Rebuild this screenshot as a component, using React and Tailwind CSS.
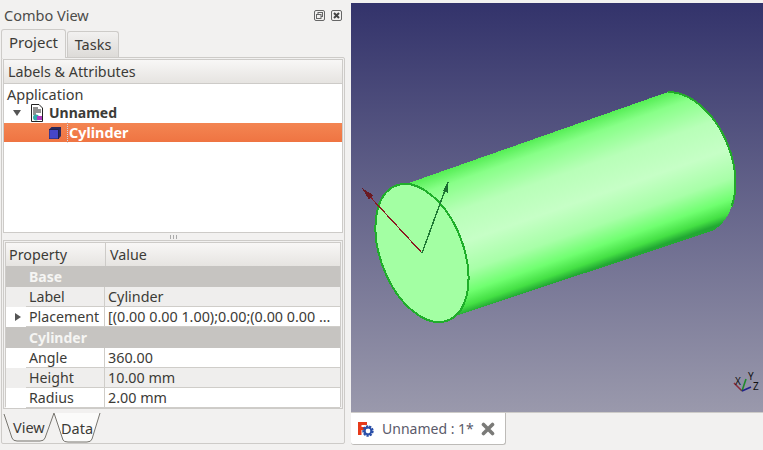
import React from "react";

const font = { fontFamily: '"Noto Sans", sans-serif' };

function Row({ name, value, alt, arrow }) {
  return (
    <div className={`flex h-[20px] ${alt ? "bg-[#efeeed]" : "bg-white"}`}>
      <div className="w-[20px] shrink-0 flex items-center justify-center pl-[4px]">
        {arrow && <div className="w-0 h-0 border-y-[4px] border-y-transparent border-l-[6px] border-l-[#555]" />}
      </div>
      <div className="flex flex-1 border-b border-[#cfcdc9] min-w-0">
        <div className="w-[79px] shrink-0 pl-[3px] border-r border-[#cfcdc9] leading-[20px] text-[14.2px] text-[#3c3b37]">{name}</div>
        <div className="flex-1 pl-[3px] leading-[20px] text-[14.35px] text-[#3c3b37] whitespace-nowrap">{value}</div>
      </div>
    </div>
  );
}

function Group({ name }) {
  return (
    <div className="bg-[#c6c4c1] pl-[23px] font-bold text-[14px] text-[#f5f5f3] h-[21px] leading-[21px]">{name}</div>
  );
}

function DocIcon() {
  return (
    <svg width="16" height="18" viewBox="0 0 16 18" className="shrink-0">
      <path d="M2.5 .5H10L13.5 4V17.5H2.5Z" fill="#fff" stroke="#222" />
      <path d="M4 4H9M4 6H12M4 8H12M4 10H7" stroke="#222" />
      <circle cx="7" cy="13.5" r="3" fill="#3aa" />
      <rect x="8" y="12" width="5" height="4" fill="#b03cc0" />
    </svg>
  );
}

function CubeIcon() {
  return (
    <svg width="14" height="14" viewBox="0 0 14 14" className="shrink-0">
      <path d="M1 3.5L3.5 1H13V10L10.5 13H1Z" fill="#28285c" />
      <rect x="1.5" y="3.5" width="9" height="9" fill="#4646c8" />
      <path d="M1 3.5H10.5V13" fill="none" stroke="#20204a" />
    </svg>
  );
}

function FreecadIcon() {
  return (
    <svg width="16" height="16" viewBox="0 0 16 16" className="shrink-0">
      <path d="M0 1H9V4H3.5V6H8V9H3.5V14H0Z" fill="#e63a1a" />
      <circle cx="10" cy="10" r="4.2" fill="none" stroke="#2a4fa8" strokeWidth="3" strokeDasharray="2 .9" />
      <circle cx="10" cy="10" r="3.4" fill="none" stroke="#2a4fa8" strokeWidth="2" />
    </svg>
  );
}

function Viewport() {
  return (
    <svg viewBox="351 3 412 409" className="w-full h-full block">
      <defs>
        <linearGradient id="bg" x1="0" y1="0" x2="0" y2="1">
          <stop offset="0" stopColor="#33336b" />
          <stop offset="1" stopColor="#9a99ac" />
        </linearGradient>
        <linearGradient id="body" gradientUnits="userSpaceOnUse" x1="540" y1="137" x2="587" y2="271">
          <stop offset="0" stopColor="#55ee55" />
          <stop offset="0.1" stopColor="#88ff88" />
          <stop offset="0.3" stopColor="#b8ffb8" />
          <stop offset="0.52" stopColor="#c6ffc6" />
          <stop offset="0.72" stopColor="#a8ffa8" />
          <stop offset="0.86" stopColor="#70ff70" />
          <stop offset="0.95" stopColor="#44e044" />
          <stop offset="1" stopColor="#22a833" />
        </linearGradient>
      </defs>
      <rect x="351" y="3" width="412" height="409" fill="url(#bg)" />
      <g shapeRendering="crispEdges">
        <path d="M403 185L668 92A49 74 -21 0 1 712 231L449 318Z" fill="url(#body)" />
        <path d="M668 92A49 74 -21 0 1 712 231" pathLength="100" strokeDasharray="82 100" fill="none" stroke="#22aa2a" strokeWidth="2" />
        <ellipse cx="422" cy="253" rx="41.4" ry="72.2" transform="rotate(-21 422 253)" fill="#a3ffa3" stroke="#1fae2a" strokeWidth="2" />
        <path d="M422 253L362 188" stroke="#8a1a22" strokeWidth="1.2" />
        <path d="M362 188L373 195L369 200Z" fill="#6a1a22" />
        <path d="M422 253L448 182" stroke="#1f7a35" strokeWidth="1.4" />
        <path d="M448 182L448 193L443 191Z" fill="#1a6a30" />
      </g>
      <g strokeWidth="1.6" fill="none">
        <path d="M742 391L734 383" stroke="#8a2a3a" />
        <path d="M742 391L746 379" stroke="#1f8a2a" />
        <path d="M742 391L751 387" stroke="#22228a" />
      </g>
      <g fontSize="10" fill="#111" style={{ fontFamily: '"Noto Sans", sans-serif' }}>
        <text x="735" y="385">X</text>
        <text x="748" y="380">Y</text>
        <text x="753" y="390">Z</text>
      </g>
    </svg>
  );
}

export default function App() {
  return (
    <div style={font} className="w-[763px] h-[450px] bg-[#f2f1f0] flex overflow-hidden text-[#3c3b37]">
      {/* Left dock */}
      <div className="w-[351px] shrink-0 flex flex-col">
        <div className="h-[29px] flex items-center pl-[4px] pr-[8px] pt-[3px]">
          <span className="text-[14.5px] text-[#4c4c4a] flex-1">Combo View</span>
          <svg width="12" height="12" viewBox="0 0 12 12" className="mr-[5px]">
            <rect x=".5" y=".5" width="10" height="10" rx="1.5" fill="none" stroke="#666" />
            <rect x="4" y="2.5" width="4.5" height="4" fill="none" stroke="#666" />
            <rect x="2.5" y="4.5" width="4.5" height="4" fill="#f2f1f0" stroke="#666" />
          </svg>
          <svg width="12" height="12" viewBox="0 0 12 12">
            <rect x=".5" y=".5" width="10" height="10" rx="1.5" fill="none" stroke="#666" />
            <path d="M3 3L8 8M8 3L3 8" stroke="#444" strokeWidth="2" />
          </svg>
        </div>

        {/* Tabs */}
        <div className="h-[29px] flex items-end pl-[1px] relative z-10 -mb-[1px]">
          <div className="w-[65px] h-[29px] bg-[#f2f1f0] border border-b-0 border-[#cdcbc8] rounded-t-[3px] text-center leading-[24px] text-[15px]">Project</div>
          <div className="w-[52px] h-[26px] ml-[1px] mb-[1px] bg-gradient-to-b from-[#f2f1f0] to-[#dddbd8] border border-b-0 border-[#cdcbc8] rounded-t-[3px] text-center leading-[24px] text-[14.5px]">Tasks</div>
        </div>

        {/* Main pane */}
        <div className="w-[344px] ml-[1px] h-[387px] shrink-0 border border-[#cdcbc8] rounded-[2px] p-[1px] flex flex-col">
          <div className="h-[174px] shrink-0 border border-[#cdcbc8] bg-white flex flex-col">
            <div className="h-[24px] shrink-0 bg-gradient-to-b from-[#f8f7f6] to-[#e6e4e1] border-b border-[#cdcbc8] pl-[4px] leading-[24px] text-[14.3px]">Labels &amp; Attributes</div>
            <div className="h-[19px] pl-[3px] leading-[20px] text-[14.5px]">Application</div>
            <div className="h-[19px] flex items-center pl-[9px]">
              <div className="w-0 h-0 border-x-[4px] border-x-transparent border-t-[6px] border-t-[#555]" />
              <div className="ml-[8px]"><DocIcon /></div>
              <span className="ml-[4px] font-bold text-[14px]">Unnamed</span>
            </div>
            <div className="h-[19px] mt-[1px] flex items-center pl-[44px] bg-gradient-to-b from-[#f38552] to-[#ef7442]">
              <CubeIcon />
              <span className="ml-[5px] font-bold text-[14.4px] text-white border-l border-dotted border-[#cfd8e8] pl-[1px]">Cylinder</span>
            </div>
          </div>
          <div className="h-[7px] shrink-0 flex items-center justify-center">
            <div className="w-[7px] h-[4px] border-x border-[#aaa] relative after:absolute after:left-[2px] after:top-0 after:w-px after:h-[4px] after:bg-[#aaa]" />
          </div>
          <div className="h-[169px] shrink-0 border border-[#cdcbc8] p-[1px] bg-[#f2f1f0]">
            <div className="h-full border border-[#cdcbc8] bg-white">
              <div className="h-[23px] flex bg-gradient-to-b from-[#f8f7f6] to-[#e6e4e1]">
                <div className="w-[100px] pl-[3px] border-r border-[#cdcbc8] leading-[23px] text-[14.3px]">Property</div>
                <div className="pl-[4px] leading-[23px] text-[14.3px]">Value</div>
              </div>
              <Group name="Base" />
              <Row name="Label" value="Cylinder" alt />
              <Row name="Placement" value="[(0.00 0.00 1.00);0.00;(0.00 0.00 …" arrow />
              <Group name="Cylinder" />
              <Row name="Angle" value="360.00" />
              <Row name="Height" value="10.00 mm" alt />
              <Row name="Radius" value="2.00 mm" />
            </div>
          </div>
          {/* Bottom tabs */}
          <div className="relative h-[34px] shrink-0 -mx-[1px]">
            <svg width="110" height="34" className="absolute left-0 top-0">
              <path d="M2 5L10 29Q11 32 15 32H38Q42 32 43 29L52 4" fill="#f2f1f0" stroke="#77756f" />
              <path d="M52 4L61 31Q62 33 66 33H85Q89 33 90 30L98 4" fill="#fbfbfa" stroke="#77756f" />
            </svg>
            <span className="absolute left-[11px] top-[8px] text-[14.5px]">View</span>
            <span className="absolute left-[59px] top-[9px] text-[14.5px]">Data</span>
          </div>
        </div>
      </div>

      {/* Right */}
      <div className="flex-1 flex flex-col pt-[3px]">
        <div className="h-[409px] shrink-0"><Viewport /></div>
        <div className="h-[33px] shrink-0 border-t border-[#cdcbc8] flex">
          <div className="w-[155px] h-[32px] bg-white border-r border-b border-[#bdbbb8] rounded-b-[3px] flex items-center pl-[7px]">
            <FreecadIcon />
            <span className="ml-[8px] text-[14px] text-[#5a5a6a]">Unnamed : 1*</span>
            <svg width="14" height="14" viewBox="0 0 14 14" className="ml-[7px]">
              <path d="M2.5 2.5L11.5 11.5M11.5 2.5L2.5 11.5" stroke="#7a7a78" strokeWidth="3.6" strokeLinecap="round" />
            </svg>
          </div>
        </div>
      </div>
    </div>
  );
}
